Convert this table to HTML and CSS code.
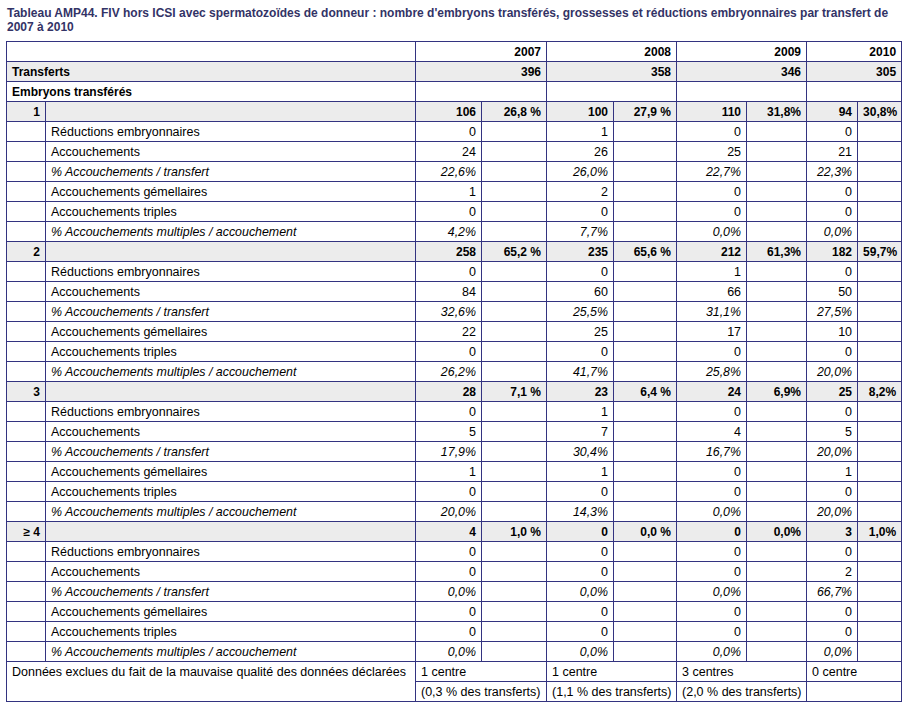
FILE: index.html
```html
<!DOCTYPE html>
<html lang="fr">
<head>
<meta charset="utf-8">
<title>Tableau AMP44</title>
<link rel="stylesheet" href="styles.css">
</head>
<body>
<h1 class="title">Tableau AMP44. FIV hors ICSI avec spermatozoïdes de donneur : nombre d'embryons transférés, grossesses et réductions embryonnaires par transfert de<br>2007 à 2010</h1>
<table class="data">
<colgroup>
<col class="w1"><col class="w2">
<col class="w3"><col class="w4">
<col class="w5"><col class="w6">
<col class="w7"><col class="w8">
<col class="w9"><col class="w10">
</colgroup>
<tbody>
<tr class="b"><td colspan="2"></td><td colspan="2" class="r">2007</td><td colspan="2" class="r">2008</td><td colspan="2" class="r">2009</td><td colspan="2" class="r">2010</td></tr>
<tr class="b g"><td colspan="2">Transferts</td><td colspan="2" class="r">396</td><td colspan="2" class="r">358</td><td colspan="2" class="r">346</td><td colspan="2" class="r">305</td></tr>
<tr class="b"><td colspan="2">Embryons transférés</td><td colspan="2"></td><td colspan="2"></td><td colspan="2"></td><td colspan="2"></td></tr>

<tr class="b g"><td class="r">1</td><td></td><td class="r">106</td><td class="r">26,8 %</td><td class="r">100</td><td class="r">27,9 %</td><td class="r">110</td><td class="r">31,8%</td><td class="r">94</td><td class="r">30,8%</td></tr>
<tr><td></td><td>Réductions embryonnaires</td><td class="r">0</td><td></td><td class="r">1</td><td></td><td class="r">0</td><td></td><td class="r">0</td><td></td></tr>
<tr><td></td><td>Accouchements</td><td class="r">24</td><td></td><td class="r">26</td><td></td><td class="r">25</td><td></td><td class="r">21</td><td></td></tr>
<tr class="i"><td></td><td>% Accouchements / transfert</td><td class="r">22,6%</td><td></td><td class="r">26,0%</td><td></td><td class="r">22,7%</td><td></td><td class="r">22,3%</td><td></td></tr>
<tr><td></td><td>Accouchements gémellaires</td><td class="r">1</td><td></td><td class="r">2</td><td></td><td class="r">0</td><td></td><td class="r">0</td><td></td></tr>
<tr><td></td><td>Accouchements triples</td><td class="r">0</td><td></td><td class="r">0</td><td></td><td class="r">0</td><td></td><td class="r">0</td><td></td></tr>
<tr class="i"><td></td><td>% Accouchements multiples / accouchement</td><td class="r">4,2%</td><td></td><td class="r">7,7%</td><td></td><td class="r">0,0%</td><td></td><td class="r">0,0%</td><td></td></tr>

<tr class="b g"><td class="r">2</td><td></td><td class="r">258</td><td class="r">65,2 %</td><td class="r">235</td><td class="r">65,6 %</td><td class="r">212</td><td class="r">61,3%</td><td class="r">182</td><td class="r">59,7%</td></tr>
<tr><td></td><td>Réductions embryonnaires</td><td class="r">0</td><td></td><td class="r">0</td><td></td><td class="r">1</td><td></td><td class="r">0</td><td></td></tr>
<tr><td></td><td>Accouchements</td><td class="r">84</td><td></td><td class="r">60</td><td></td><td class="r">66</td><td></td><td class="r">50</td><td></td></tr>
<tr class="i"><td></td><td>% Accouchements / transfert</td><td class="r">32,6%</td><td></td><td class="r">25,5%</td><td></td><td class="r">31,1%</td><td></td><td class="r">27,5%</td><td></td></tr>
<tr><td></td><td>Accouchements gémellaires</td><td class="r">22</td><td></td><td class="r">25</td><td></td><td class="r">17</td><td></td><td class="r">10</td><td></td></tr>
<tr><td></td><td>Accouchements triples</td><td class="r">0</td><td></td><td class="r">0</td><td></td><td class="r">0</td><td></td><td class="r">0</td><td></td></tr>
<tr class="i"><td></td><td>% Accouchements multiples / accouchement</td><td class="r">26,2%</td><td></td><td class="r">41,7%</td><td></td><td class="r">25,8%</td><td></td><td class="r">20,0%</td><td></td></tr>

<tr class="b g"><td class="r">3</td><td></td><td class="r">28</td><td class="r">7,1 %</td><td class="r">23</td><td class="r">6,4 %</td><td class="r">24</td><td class="r">6,9%</td><td class="r">25</td><td class="r">8,2%</td></tr>
<tr><td></td><td>Réductions embryonnaires</td><td class="r">0</td><td></td><td class="r">1</td><td></td><td class="r">0</td><td></td><td class="r">0</td><td></td></tr>
<tr><td></td><td>Accouchements</td><td class="r">5</td><td></td><td class="r">7</td><td></td><td class="r">4</td><td></td><td class="r">5</td><td></td></tr>
<tr class="i"><td></td><td>% Accouchements / transfert</td><td class="r">17,9%</td><td></td><td class="r">30,4%</td><td></td><td class="r">16,7%</td><td></td><td class="r">20,0%</td><td></td></tr>
<tr><td></td><td>Accouchements gémellaires</td><td class="r">1</td><td></td><td class="r">1</td><td></td><td class="r">0</td><td></td><td class="r">1</td><td></td></tr>
<tr><td></td><td>Accouchements triples</td><td class="r">0</td><td></td><td class="r">0</td><td></td><td class="r">0</td><td></td><td class="r">0</td><td></td></tr>
<tr class="i"><td></td><td>% Accouchements multiples / accouchement</td><td class="r">20,0%</td><td></td><td class="r">14,3%</td><td></td><td class="r">0,0%</td><td></td><td class="r">20,0%</td><td></td></tr>

<tr class="b g"><td class="r">≥ 4</td><td></td><td class="r">4</td><td class="r">1,0 %</td><td class="r">0</td><td class="r">0,0 %</td><td class="r">0</td><td class="r">0,0%</td><td class="r">3</td><td class="r">1,0%</td></tr>
<tr><td></td><td>Réductions embryonnaires</td><td class="r">0</td><td></td><td class="r">0</td><td></td><td class="r">0</td><td></td><td class="r">0</td><td></td></tr>
<tr><td></td><td>Accouchements</td><td class="r">0</td><td></td><td class="r">0</td><td></td><td class="r">0</td><td></td><td class="r">2</td><td></td></tr>
<tr class="i"><td></td><td>% Accouchements / transfert</td><td class="r">0,0%</td><td></td><td class="r">0,0%</td><td></td><td class="r">0,0%</td><td></td><td class="r">66,7%</td><td></td></tr>
<tr><td></td><td>Accouchements gémellaires</td><td class="r">0</td><td></td><td class="r">0</td><td></td><td class="r">0</td><td></td><td class="r">0</td><td></td></tr>
<tr><td></td><td>Accouchements triples</td><td class="r">0</td><td></td><td class="r">0</td><td></td><td class="r">0</td><td></td><td class="r">0</td><td></td></tr>
<tr class="i"><td></td><td>% Accouchements multiples / accouchement</td><td class="r">0,0%</td><td></td><td class="r">0,0%</td><td></td><td class="r">0,0%</td><td></td><td class="r">0,0%</td><td></td></tr>

<tr><td colspan="2" rowspan="2" class="top">Données exclues du fait de la mauvaise qualité des données déclarées</td><td colspan="2">1 centre</td><td colspan="2">1 centre</td><td colspan="2">3 centres</td><td colspan="2">0 centre</td></tr>
<tr><td colspan="2">(0,3 % des transferts)</td><td colspan="2">(1,1 % des transferts)</td><td colspan="2">(2,0 % des transferts)</td><td colspan="2"></td></tr>
</tbody>
</table>
</body>
</html>
```
FILE: styles.css
```css
html, body {
  margin: 0;
  padding: 0;
  background: #ffffff;
}
body {
  padding: 6px 6px 0 6px;
  font-family: "Liberation Sans", Arial, sans-serif;
  font-size: 12px;
  color: #000000;
}
.title {
  margin: 0 0 7px 1px;
  font-size: 12px;
  line-height: 14px;
  font-weight: bold;
  color: #333366;
}
.data {
  border-collapse: collapse;
  table-layout: fixed;
  width: 896px;
}
.data td {
  border: 1px solid #333380;
  height: 19px;
  padding: 0 5px;
  font-size: 12.5px;
  line-height: 14px;
  vertical-align: middle;
  white-space: nowrap;
  overflow: hidden;
}
.data td.r { text-align: right; }
.data td.top { vertical-align: top; padding-top: 3px; }
.data tr.b td { font-weight: bold; font-size: 12px; }
.data tr.i td { font-style: italic; font-size: 12.4px; }
.data tr.g td { background: #ececec; }
.w1 { width: 39px; }
.w2 { width: 370px; }
.w3 { width: 66px; }
.w4 { width: 65px; }
.w5 { width: 67px; }
.w6 { width: 63px; }
.w7 { width: 70px; }
.w8 { width: 60px; }
.w9 { width: 51px; }
.w10 { width: 44px; }
```
